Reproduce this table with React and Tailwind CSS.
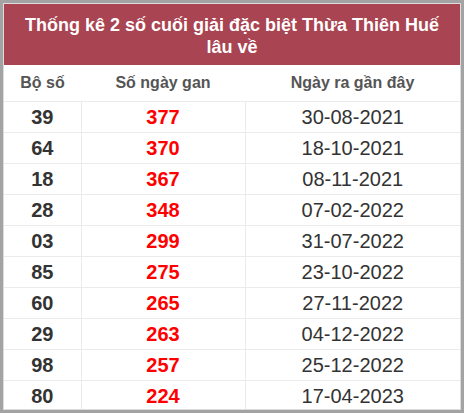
const rows = [
  ["39", "377", "30-08-2021"],
  ["64", "370", "18-10-2021"],
  ["18", "367", "08-11-2021"],
  ["28", "348", "07-02-2022"],
  ["03", "299", "31-07-2022"],
  ["85", "275", "23-10-2022"],
  ["60", "265", "27-11-2022"],
  ["29", "263", "04-12-2022"],
  ["98", "257", "25-12-2022"],
  ["80", "224", "17-04-2023"],
];

export default function App() {
  return (
    <div className="w-[464px] h-[413px] bg-[#a3a3a3] p-[3px] font-['Liberation_Sans',Arial,sans-serif]">
      <div className="h-full bg-white border border-[#dcdcdc] overflow-hidden">
        <div className="bg-[#a94452] text-white font-bold text-[18px] leading-[22px] text-center px-2 pt-[10px] h-[61px]">
          Thống kê 2 số cuối giải đặc biệt Thừa Thiên Huế
          <br />
          lâu về
        </div>
        <table className="w-full border-collapse table-fixed">
          <colgroup>
            <col className="w-[77px]" />
            <col className="w-[164px]" />
            <col />
          </colgroup>
          <thead>
            <tr className="h-[36px] border-b border-[#ebebeb]">
              <th className="font-bold text-[16px] text-[#555] p-0">Bộ số</th>
              <th className="font-bold text-[16px] text-[#555] p-0">Số ngày gan</th>
              <th className="font-bold text-[16px] text-[#555] p-0">Ngày ra gần đây</th>
            </tr>
          </thead>
          <tbody>
            {rows.map((r, i) => (
              <tr key={i} className="h-[31px] border-b border-[#ebebeb] last:border-b-0">
                <td className="text-center font-bold text-[20px] text-[#333] border-r border-[#ebebeb] p-0">{r[0]}</td>
                <td className="text-center font-bold text-[20px] text-[#ff0000] border-r border-[#ebebeb] p-0">{r[1]}</td>
                <td className="text-center text-[20px] text-[#333] p-0">{r[2]}</td>
              </tr>
            ))}
          </tbody>
        </table>
      </div>
    </div>
  );
}
